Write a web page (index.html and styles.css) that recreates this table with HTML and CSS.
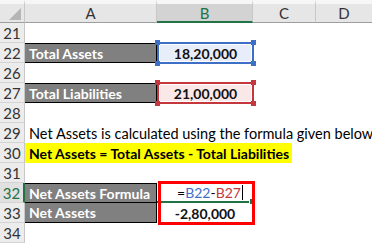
FILE: index.html
```html
<!DOCTYPE html>
<html>
<head>
<meta charset="utf-8">
<link rel="stylesheet" href="styles.css">
</head>
<body>
<div class="sheet">
  <div class="corner"><span class="tri"></span></div>
  <div class="colhead">A</div>
  <div class="colhead active">B</div>
  <div class="colhead">C</div>
  <div class="colhead last">D</div>

  <div class="rowhead">21</div>
  <div class="cell span4"></div>

  <div class="rowhead">22</div>
  <div class="cell label">Total Assets</div>
  <div class="cell num ref blue">18,20,000<span class="h tl"></span><span class="h tr"></span><span class="h bl"></span><span class="h br"></span></div>
  <div class="cell span2"></div>

  <div class="rowhead">26</div>
  <div class="cell span4"></div>

  <div class="rowhead">27</div>
  <div class="cell label">Total Liabilities</div>
  <div class="cell num ref red">21,00,000<span class="h tl"></span><span class="h tr"></span><span class="h bl"></span><span class="h br"></span></div>
  <div class="cell span2"></div>

  <div class="rowhead">28</div>
  <div class="cell span4"></div>

  <div class="rowhead">29</div>
  <div class="cell span4 text">Net Assets is calculated using the formula given below</div>

  <div class="rowhead">30</div>
  <div class="cell span4"><span class="yellow">Net Assets = Total Assets - Total Liabilities</span></div>

  <div class="rowhead">31</div>
  <div class="cell span4"></div>

  <div class="rowhead current">32</div>
  <div class="cell label top">Net Assets Formula</div>
  <div class="cell formula"><span class="f"><span>=</span><span class="fb">B22</span><span>-</span><span class="fr">B27</span></span><span class="caret"></span><span class="fill"></span><span class="mark"></span></div>
  <div class="cell span2"></div>

  <div class="rowhead">33</div>
  <div class="cell label bottom">Net Assets</div>
  <div class="cell num">-2,80,000</div>
  <div class="cell span2"></div>

  <div class="rowhead">34</div>
  <div class="cell span4"></div>
</div>
</body>
</html>
```

FILE: styles.css
```css
html, body {
  margin: 0;
  padding: 0;
  background: #ffffff;
}
body {
  font-family: Lato, "Liberation Sans", sans-serif;
  font-size: 14px;
  color: #000;
}
.sheet {
  display: grid;
  grid-template-columns: 25px 132px 96px 63px 56px;
  grid-template-rows: 23px repeat(11, 20px);
  width: 372px;
  height: 243px;
  overflow: hidden;
}
.corner {
  background: #e6e6e6;
  border-top: 4px solid #f6f6f6;
  border-right: 1px solid #c8c8c8;
  border-bottom: 1px solid #9e9e9e;
  box-sizing: border-box;
  position: relative;
}
.tri {
  position: absolute;
  right: 3px;
  bottom: 2px;
  width: 0;
  height: 0;
  border-left: 12px solid transparent;
  border-bottom: 12px solid #b5b5b5;
}
.colhead {
  background: #e6e6e6;
  border-top: 4px solid #f6f6f6;
  border-right: 1px solid #c8c8c8;
  border-bottom: 1px solid #9e9e9e;
  box-sizing: border-box;
  display: flex;
  align-items: center;
  justify-content: center;
  font-size: 15px;
  color: #333;
}
.colhead.last { border-right: none; }
.colhead.active {
  background: #d3d3d3;
  border-bottom: 2px solid #217346;
  color: #217346;
}
.rowhead {
  background: #ececec;
  border-right: 1px solid #c8c8c8;
  border-bottom: 1px solid #d4d4d4;
  box-sizing: border-box;
  display: flex;
  align-items: center;
  justify-content: center;
  font-size: 15px;
  color: #333;
  padding-top: 1px;
}
.rowhead.current {
  background: #e1e1e1;
  color: #217346;
  border-right: 2px solid #217346;
}
.cell {
  box-sizing: border-box;
  display: flex;
  align-items: center;
  white-space: nowrap;
  min-width: 0;
}
.span4 { grid-column: 2 / 6; }
.span2 { grid-column: 4 / 6; }
.text { padding-left: 4px; font-size: 14.5px; }
.label {
  background: #808080;
  color: #fff;
  font-weight: bold;
  padding-left: 4px;
  border-top: 1px solid #000;
  border-bottom: 1px solid #000;
  border-right: 1px solid #000;
}
.label.bottom { border-top: none; }
.num {
  justify-content: center;
  font-weight: bold;
  color: #111;
}
.ref {
  position: relative;
  border: 2px solid;
  box-shadow: inset 0 0 0 1px #fff;
  margin: -1px -1px -1px 0;
}
.ref.blue { border-color: #3e6fc6; background: #e8eef9; }
.ref.red { border-color: #c4373d; background: #fae8e8; }
.h {
  position: absolute;
  width: 5px;
  height: 5px;
}
.blue .h { background: #3e6fc6; }
.red .h { background: #c4373d; }
.h.tl { left: -4px; top: -4px; }
.h.tr { right: -4px; top: -4px; }
.h.bl { left: -4px; bottom: -4px; }
.h.br { right: -4px; bottom: -4px; }
.yellow {
  background: #ffff00;
  font-weight: bold;
  height: 100%;
  width: 267px;
  display: flex;
  align-items: center;
  padding-left: 4px;
  box-sizing: border-box;
}
.formula {
  position: relative;
  border-bottom: 2px solid #217346;
  padding-left: 20px;
}
.f .fb { color: #3e6fc6; }
.f .fr { color: #c4373d; }
.caret {
  width: 1px;
  height: 15px;
  background: #000;
  margin-left: 1px;
}
.fill {
  position: absolute;
  right: -3px;
  bottom: -4px;
  width: 5px;
  height: 5px;
  background: #217346;
  border: 1px solid #fff;
}
.mark {
  position: absolute;
  left: 1px;
  top: -2px;
  width: 97px;
  height: 44px;
  border: 3px solid #ff0000;
  box-sizing: border-box;
}
```
